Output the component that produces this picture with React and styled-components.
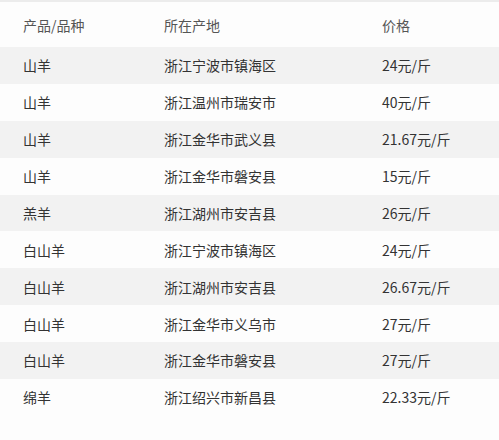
import styled, { createGlobalStyle } from "styled-components";

const rows = [
  ["山羊", "浙江宁波市镇海区", "24元/斤"],
  ["山羊", "浙江温州市瑞安市", "40元/斤"],
  ["山羊", "浙江金华市武义县", "21.67元/斤"],
  ["山羊", "浙江金华市磐安县", "15元/斤"],
  ["羔羊", "浙江湖州市安吉县", "26元/斤"],
  ["白山羊", "浙江宁波市镇海区", "24元/斤"],
  ["白山羊", "浙江湖州市安吉县", "26.67元/斤"],
  ["白山羊", "浙江金华市义乌市", "27元/斤"],
  ["白山羊", "浙江金华市磐安县", "27元/斤"],
  ["绵羊", "浙江绍兴市新昌县", "22.33元/斤"],
];

const GlobalStyle = createGlobalStyle`
  html, body {
    margin: 0;
    padding: 0;
    background: #fdfdfd;
  }
  body {
    font-family: "Noto Sans CJK SC", "Noto Sans", sans-serif;
  }
`;

const Page = styled.div`
  width: 499px;
  height: 440px;
  background: #fdfdfd;
  border-top: 2px solid #ececec;
  box-sizing: border-box;
  overflow: hidden;
`;

const Row = styled.div`
  display: grid;
  grid-template-columns: 141px 218px 1fr;
  align-items: center;
  padding-left: 23px;
  height: ${(p) => (p.$head ? "45px" : "36.875px")};
  background: ${(p) => (p.$shade ? "#f2f2f2" : "transparent")};
  color: ${(p) => (p.$head ? "#555555" : "#333333")};
  font-size: 14px;
  line-height: 1;
`;

const Cell = styled.div`
  white-space: nowrap;
  padding-top: ${(p) => (p.$head ? "1px" : "0")};
`;

export default function App() {
  return (
    <>
      <GlobalStyle />
      <Page>
        <Row $head>
          <Cell $head>产品/品种</Cell>
          <Cell $head>所在产地</Cell>
          <Cell $head>价格</Cell>
        </Row>
        {rows.map((r, i) => (
          <Row key={i} $shade={i % 2 === 0}>
            {r.map((c, j) => (
              <Cell key={j}>{c}</Cell>
            ))}
          </Row>
        ))}
      </Page>
    </>
  );
}
